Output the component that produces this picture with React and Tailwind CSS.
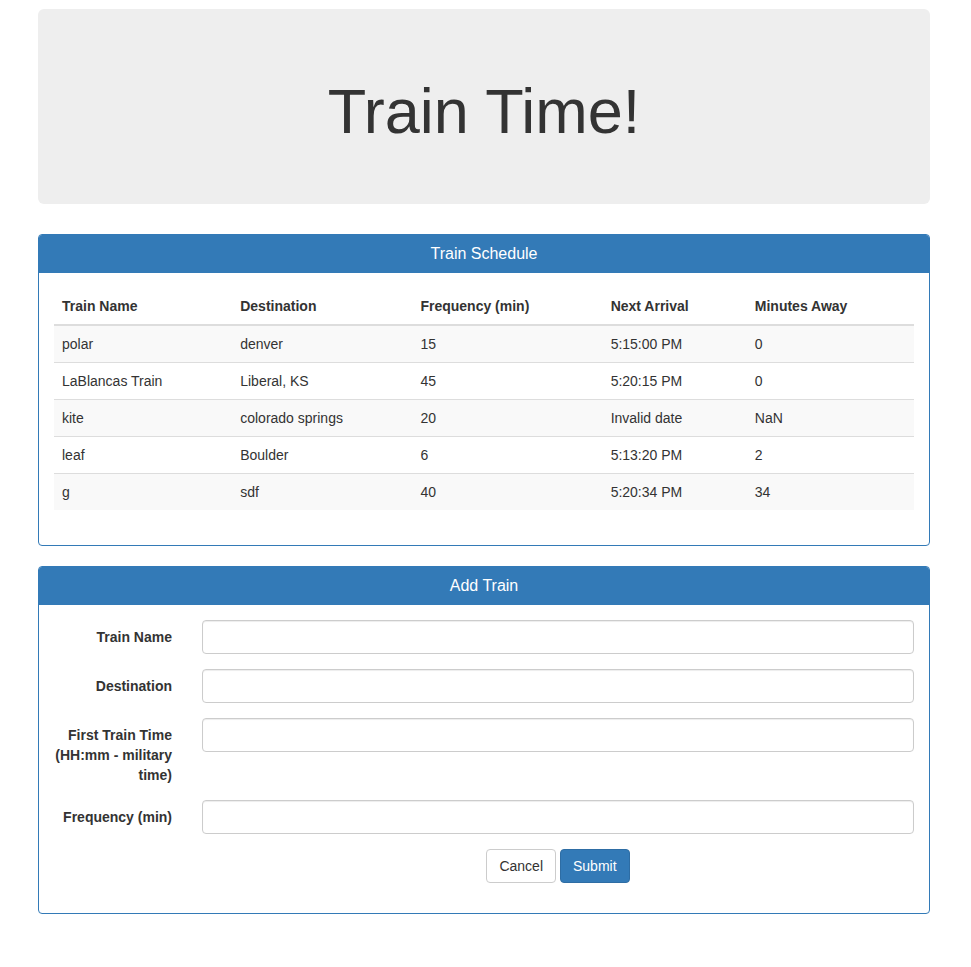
import React from "react";

const rows = [
  ["polar", "denver", "15", "5:15:00 PM", "0"],
  ["LaBlancas Train", "Liberal, KS", "45", "5:20:15 PM", "0"],
  ["kite", "colorado springs", "20", "Invalid date", "NaN"],
  ["leaf", "Boulder", "6", "5:13:20 PM", "2"],
  ["g", "sdf", "40", "5:20:34 PM", "34"],
];

const widths = ["w-[178px]", "w-[180px]", "w-[190px]", "w-[144px]", "w-[167px]"];
const heads = ["Train Name", "Destination", "Frequency (min)", "Next Arrival", "Minutes Away"];

function Field({ label }) {
  return (
    <div className="flex mb-[15px]">
      <label className="w-[148px] shrink-0 px-[15px] pt-[7px] text-right font-bold text-[14px] leading-[20px] text-[#333]">
        {label}
      </label>
      <div className="flex-1 px-[15px]">
        <input
          type="text"
          className="block w-full h-[34px] px-[12px] py-[6px] text-[14px] text-[#555] bg-white border border-[#ccc] rounded-[4px] shadow-[inset_0_1px_1px_rgba(0,0,0,0.075)] outline-none"
        />
      </div>
    </div>
  );
}

export default function App() {
  return (
    <div
      className="bg-white text-[#333] text-[14px] leading-[20px] min-h-[967px]"
      style={{ fontFamily: '"Liberation Sans", Arial, Helvetica, sans-serif' }}
    >
      <div className="w-[892px] ml-[38px] pt-[9px]">
        <div className="bg-[#eeeeee] rounded-[6px] px-[60px] py-[48px] mb-[30px]">
          <h1 className="mt-[20px] mb-[10px] text-center text-[63px] leading-[1.1] font-medium text-[#333]">
            Train Time!
          </h1>
        </div>

        <div className="border border-[#337ab7] rounded-[4px] mb-[20px] bg-white">
          <div className="bg-[#337ab7] text-white text-center px-[15px] py-[10px] rounded-t-[3px]">
            <h3 className="text-[16px] leading-[18px] font-normal">Train Schedule</h3>
          </div>
          <div className="p-[15px]">
            <table className="w-full mb-[20px] border-collapse">
              <thead>
                <tr>
                  {heads.map((h, i) => (
                    <th
                      key={h}
                      className={`${widths[i]} text-left font-bold p-[8px] leading-[20px] border-b-2 border-[#ddd] align-bottom`}
                    >
                      {h}
                    </th>
                  ))}
                </tr>
              </thead>
              <tbody>
                {rows.map((r, ri) => (
                  <tr key={ri} className={ri % 2 === 0 ? "bg-[#f9f9f9]" : ""}>
                    {r.map((c, ci) => (
                      <td key={ci} className="p-[8px] leading-[20px] border-t border-[#ddd] align-top">
                        {c}
                      </td>
                    ))}
                  </tr>
                ))}
              </tbody>
            </table>
          </div>
        </div>

        <div className="border border-[#337ab7] rounded-[4px] mb-[20px] bg-white">
          <div className="bg-[#337ab7] text-white text-center px-[15px] py-[10px] rounded-t-[3px]">
            <h3 className="text-[16px] leading-[18px] font-normal">Add Train</h3>
          </div>
          <div className="p-[15px]">
            <form className="mx-[-15px]" onSubmit={(e) => e.preventDefault()}>
              <Field label="Train Name" />
              <Field label="Destination" />
              <Field label="First Train Time (HH:mm - military time)" />
              <Field label="Frequency (min)" />
              <div className="flex mb-[15px]">
                <div className="w-[148px] shrink-0" />
                <div className="flex-1 px-[15px] flex justify-center gap-[4px]">
                  <button
                    type="button"
                    className="h-[34px] px-[12px] py-[6px] text-[14px] leading-[20px] text-[#333] bg-white border border-[#ccc] rounded-[4px]"
                  >
                    Cancel
                  </button>
                  <button
                    type="submit"
                    className="h-[34px] px-[12px] py-[6px] text-[14px] leading-[20px] text-white bg-[#337ab7] border border-[#2e6da4] rounded-[4px]"
                  >
                    Submit
                  </button>
                </div>
              </div>
            </form>
          </div>
        </div>
      </div>
    </div>
  );
}
